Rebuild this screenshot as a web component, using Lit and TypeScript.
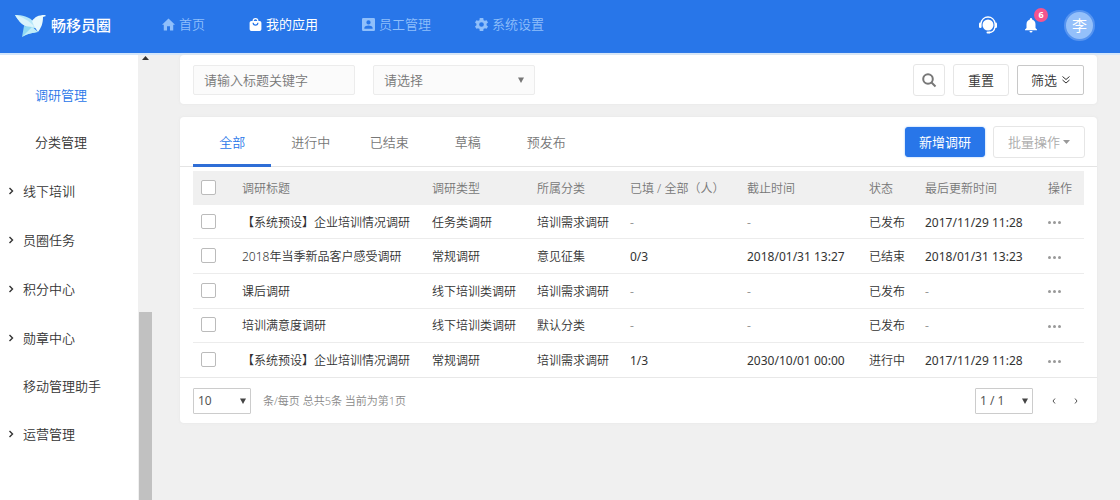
import { LitElement, html, css, svg, nothing } from "lit";
import { customElement, state } from "lit/decorators.js";
import { classMap } from "lit/directives/class-map.js";

interface Survey {
  title: string;
  type: string;
  category: string;
  filled: string;
  deadline: string;
  status: string;
  updated: string;
}

const SURVEYS: Survey[] = [
  { title: "【系统预设】企业培训情况调研", type: "任务类调研", category: "培训需求调研", filled: "-", deadline: "-", status: "已发布", updated: "2017/11/29 11:28" },
  { title: "2018年当季新品客户感受调研", type: "常规调研", category: "意见征集", filled: "0/3", deadline: "2018/01/31 13:27", status: "已结束", updated: "2018/01/31 13:23" },
  { title: "课后调研", type: "线下培训类调研", category: "培训需求调研", filled: "-", deadline: "-", status: "已发布", updated: "-" },
  { title: "培训满意度调研", type: "线下培训类调研", category: "默认分类", filled: "-", deadline: "-", status: "已发布", updated: "-" },
  { title: "【系统预设】企业培训情况调研", type: "常规调研", category: "培训需求调研", filled: "1/3", deadline: "2030/10/01 00:00", status: "进行中", updated: "2017/11/29 11:28" },
];

const NAV = [
  { label: "首页", icon: svg`<path d="M9.500 22v-7h5v7h5.500v-9.500h3L12 2 1 12.500h3V22z"/>` },
  { label: "我的应用", icon: svg`<path d="M19 6h-2A5 5 0 0 0 7 6H5a3 3 0 0 0-3 3v11a3 3 0 0 0 3 3h14a3 3 0 0 0 3-3V9a3 3 0 0 0-3-3zm-7-3a3 3 0 0 1 3 3H9a3 3 0 0 1 3-3zm0 11a5 5 0 0 1-5-5h2a3 3 0 0 0 6 0h2a5 5 0 0 1-5 5z"/>` },
  { label: "员工管理", icon: svg`<path d="M3 1a2 2 0 0 0-2 2v18a2 2 0 0 0 2 2h18a2 2 0 0 0 2-2V3a2 2 0 0 0-2-2zm9 4a3.600 3.600 0 1 1 0 7.200A3.600 3.600 0 0 1 12 5zm7 14H5v-1.500c0-2.500 4.500-3.800 7-3.800s7 1.300 7 3.800z"/>` },
  { label: "系统设置", icon: svg`<path d="M20.500 13.200a9 9 0 0 0 0-2.400l2.500-2-2.400-4.200-3 1.200a9 9 0 0 0-2.100-1.200L15 1H9l-.5 3.600a9 9 0 0 0-2.100 1.200l-3-1.200L1 8.800l2.500 2a9 9 0 0 0 0 2.400l-2.500 2 2.400 4.200 3-1.200a9 9 0 0 0 2.100 1.200L9 23h6l.5-3.600a9 9 0 0 0 2.100-1.200l3 1.200 2.400-4.200zM12 16a4 4 0 1 1 0-8 4 4 0 0 1 0 8z"/>` },
];

const MENU = [
  { label: "调研管理", kind: "sub", active: true },
  { label: "分类管理", kind: "sub" },
  { label: "线下培训", kind: "group" },
  { label: "员圈任务", kind: "group" },
  { label: "积分中心", kind: "group" },
  { label: "勋章中心", kind: "group" },
  { label: "移动管理助手", kind: "plain" },
  { label: "运营管理", kind: "group" },
];

const TABS = ["全部", "进行中", "已结束", "草稿", "预发布"];

const caret = html`<svg class="caret" viewBox="0 0 6 6" aria-hidden="true"><path d="M0 0.500h6L3 6z"/></svg>`;

@customElement("app-root")
export class AppRoot extends LitElement {
  @state() private tab = 0;

  static styles = css`
    :host {
      display: flex;
      flex-direction: column;
      min-height: 100vh;
      background: #f0f0f0;
      color: #333;
      font: 350 13px/20px "Noto Sans", "Noto Sans CJK SC", sans-serif;
    }
    * { box-sizing: border-box; }
    a { color: inherit; text-decoration: none; }
    button, input, select { font: inherit; color: inherit; margin: 0; }
    button { cursor: pointer; padding: 0; }
    svg { display: block; }

    .top {
      display: flex;
      align-items: center;
      height: 55px;
      padding: 0 25px 4px 14px;
      background: #2876e9;
      border-bottom: 2px solid #d3e6fb;
      color: #fff;
    }
    .brand { display: flex; align-items: center; gap: 4px; width: 148px; font-size: 15px; font-weight: 500; }
    .bird { width: 33px; height: 24px; }
    .nav { display: flex; flex: 1; gap: 44px; padding-bottom: 1px; }
    .nav-link { display: flex; align-items: center; gap: 4px; color: #8fbffb; white-space: nowrap; }
    .nav-link svg { width: 13px; height: 13px; fill: currentColor; }
    .nav-link.active { color: #fff; font-weight: 400; }
    .tools { display: flex; align-items: center; gap: 24px; padding-top: 1px; }
    .tool { display: grid; place-content: center; position: relative; border: 0; background: none; color: #fff; }
    .tool svg { fill: currentColor; }
    .headset { width: 20px; height: 20px; }
    .bell { width: 18px; height: 18px; }
    .badge {
      position: absolute;
      top: -8px;
      right: -8px;
      width: 14px;
      border-radius: 7px;
      background: #f5548e;
      font-size: 9px;
      line-height: 14px;
      font-weight: 700;
      text-align: center;
    }
    .avatar {
      width: 31px;
      height: 31px;
      border: 2px solid #5694f0;
      border-radius: 50%;
      background: #94c0fa;
      color: #fff;
      font-size: 15px;
      font-weight: 400;
    }

    .body { display: flex; flex: 1; }
    .side { display: flex; width: 152px; background: #fff; }
    .menu { flex: 1; padding-top: 16px; }
    .menu-link { display: flex; align-items: center; height: 47px; padding-left: 23px; }
    .menu-link.sub { padding-left: 35px; }
    .menu-link.group { height: 49px; padding-left: 7px; gap: 8px; }
    .menu-link.sub + .menu-link.group { margin-top: 1px; }
    .menu-link.active { color: #2876e9; }
    .chev { width: 8px; height: 8px; fill: none; stroke: #333; stroke-width: 1.400; }
    .track { display: flex; flex-direction: column; width: 14px; padding-left: 1px; background: #f0f0f0; }
    .track svg { width: 7px; height: 4px; margin: 1px 3px 0; fill: #333; }
    .thumb { flex: 1; margin-top: 252px; background: #c1c1c1; }

    .main { flex: 1; min-width: 0; padding: 0 23px 0 28px; }
    .card { border-radius: 4px; background: #fff; box-shadow: 0 0 3px #e4e4e4; }
    .filters { display: flex; align-items: center; gap: 8px; padding: 9px 13px 8px; margin-bottom: 13px; }
    .field {
      width: 162px;
      height: 30px;
      padding: 0 10px;
      border: 1px solid #ececec;
      border-radius: 2px;
      background: #fbfbfb;
      color: #777;
      outline: 0;
    }
    .field::placeholder { color: #777; opacity: 1; }
    .picker { display: grid; align-items: center; }
    .picker > * { grid-area: 1 / 1; }
    .picker select { appearance: none; }
    .caret { width: 6px; height: 6px; margin-right: 11px; justify-self: end; fill: #777; pointer-events: none; }
    .filters .picker { margin: 0 auto 0 10px; }
    .btn {
      display: flex;
      align-items: center;
      justify-content: center;
      gap: 5px;
      height: 32px;
      padding: 0 14px;
      border: 1px solid #e6e6e6;
      border-radius: 3px;
      background: #fff;
      white-space: nowrap;
    }
    .btn svg { fill: none; stroke: currentColor; }
    .btn.square { width: 32px; padding: 0; }
    .btn.square svg { width: 16px; height: 16px; stroke-width: 2; color: #777; }
    .btn.outline { height: 30px; padding: 0 13px; border-color: #c8c8c8; border-radius: 2px; }
    .btn.outline svg { width: 8px; height: 8px; }
    .btn.primary { height: 30px; padding: 0 13px; border-color: #2876e9; background: #2876e9; color: #fff; font-weight: 400; box-shadow: 0 0 2px #8bbcfb; }
    .btn.muted { padding: 0 14px; color: #aaa; gap: 3px; }
    .btn.muted svg { width: 7px; height: 4px; fill: #999; stroke: none; }

    .bar { display: flex; align-items: center; gap: 8px; height: 50px; padding: 0 12px 0 13px; border-bottom: 1px solid #e4e4e4; }
    .tabs { display: grid; grid-template-columns: repeat(5, 1fr); align-self: stretch; flex: 0 0 44%; margin: 0 auto -1px 0; }
    .tab { border: 0; border-bottom: 3px solid transparent; padding-top: 3px; background: none; color: #777; }
    .tab.active { border-color: #2f6ed6; color: #2876e9; }

    .list { padding: 4px 13px 0; border-bottom: 1px solid #e8e8e8; }
    .table { width: 100%; height: 206px; table-layout: fixed; border-spacing: 0; font-size: 12px; }
    .table th, .table td { padding: 2px 0 0; text-align: left; font-weight: 350; white-space: nowrap; }
    .table th { height: 34px; background: #f0f0f0; color: #777; }
    .table tr + tr td { border-top: 1px solid #ececec; }
    .table td.value { font-weight: 400; }
    .table td.none { color: #999; }
    .c-check { width: 49px; }
    .c-title { width: 190px; }
    .c-type { width: 105px; }
    .c-cat { width: 93px; }
    .c-filled { width: 117px; }
    .c-due { width: 122px; }
    .c-status { width: 56px; }
    .c-upd { width: 123px; }
    .c-act { width: 36px; }
    .check {
      display: block;
      appearance: none;
      width: 15px;
      height: 15px;
      margin: 0 0 3px 8px;
      border: 1px solid #bbb;
      border-radius: 2px;
      background: #fff;
    }
    .check:checked { background: #2876e9; }
    .more { display: block; border: 0; background: none; }
    .more svg { width: 13px; height: 3px; fill: #999; }

    .foot { display: flex; align-items: center; gap: 12px; height: 45px; padding: 0 16px 0 13px; color: #888; font-size: 11px; }
    .foot select {
      width: 58px;
      height: 26px;
      padding: 0 4px;
      border: 1px solid #ccc;
      border-radius: 1px;
      background: #fff;
      color: #555;
      font-size: 12px;
      font-weight: 400;
    }
    .foot .caret { margin-right: 5px; fill: #444; }
    .count { margin-right: auto; }
    .pages { margin-right: 4px; }
    .step { width: 10px; height: 10px; border: 0; background: none; }
    .step svg { width: 10px; height: 10px; fill: none; stroke: #555; }
  `;

  private renderHeader() {
    return html`
      <header class="top">
        <a class="brand" href="#">
          <svg class="bird" viewBox="0 0 33 24" aria-hidden="true">
            <path fill="#b4e6f8" d="M1 2c7 0 14 1 20 8l3 4-6 2C10 14 5 9 1 2z"/>
            <path fill="#d9f3fb" d="M1 2c8 2 14 6 19 11l-2 2C10 14 5 9 1 2z"/>
            <path fill="#e8f9fd" d="M18 8c3-4 6-6 13-6l1 1-3 1c0 7-2 11-5 15l-4-6z"/>
            <path fill="#8fd8f3" d="M10 13l8 1 6 5c-5 1-10 1-16 5z"/>
            <path fill="#c0ecf8" d="M18 14l6 5c-5 1-10 1-16 5z"/>
          </svg>
          <span>畅移员圈</span>
        </a>
        <nav class="nav">
          ${NAV.map((n, i) => html`
            <a href="#" class=${classMap({ "nav-link": true, active: i === 1 })}>
              <svg viewBox="1 1 22 22" aria-hidden="true">${n.icon}</svg>${n.label}
            </a>`)}
        </nav>
        <div class="tools">
          <button class="tool" aria-label="客服">
            <svg class="headset" viewBox="0 0 20 20">
              <circle cx="10" cy="10" r="5.500"/>
              <path d="M3 8.500C3.500 4.500 6.500 2 10 2s6.500 2.500 7 6.500M17 12c-.5 3.500-3 5.500-6 5.500" fill="none" stroke="currentColor" stroke-width="1.400"/>
              <rect x="1" y="7.500" width="2.600" height="5.500" rx="1.200"/>
              <rect x="16.400" y="7.500" width="2.600" height="5.500" rx="1.200"/>
              <rect x="8.500" y="16.400" width="4" height="2.200" rx="1.100"/>
            </svg>
          </button>
          <button class="tool" aria-label="通知">
            <svg class="bell" viewBox="0 0 24 24"><path d="M12 22a2 2 0 0 0 2-2h-4a2 2 0 0 0 2 2zm6-6v-5c0-3.070-1.640-5.640-4.500-6.320V4a1.500 1.500 0 0 0-3 0v.68C7.630 5.360 6 7.920 6 11v5l-2 2v1h16v-1z"/></svg>
            <span class="badge">6</span>
          </button>
          <button class="tool avatar">李</button>
        </div>
      </header>`;
  }

  private renderSide() {
    return html`
      <aside class="side">
        <nav class="menu">
          ${MENU.map((m) => html`
            <a href="#" class=${classMap({ "menu-link": true, [m.kind]: true, active: !!m.active })}>
              ${m.kind === "group" ? html`<svg class="chev" viewBox="0 0 8 8" aria-hidden="true"><path d="M2.500 1l3 3-3 3"/></svg>` : nothing}
              ${m.label}
            </a>`)}
        </nav>
        <div class="track">
          <svg viewBox="0 0 7 4" aria-hidden="true"><path d="M0 4h7L3.500 0z"/></svg>
          <div class="thumb"></div>
        </div>
      </aside>`;
  }

  private cell(value: string) {
    return html`<td class=${classMap({ value: true, none: value === "-" })}>${value}</td>`;
  }

  private renderTable() {
    return html`
      <table class="table">
        <thead>
          <tr>
            <th class="c-check"><input class="check" type="checkbox" aria-label="全选"></th>
            <th class="c-title">调研标题</th>
            <th class="c-type">调研类型</th>
            <th class="c-cat">所属分类</th>
            <th class="c-filled">已填 / 全部（人）</th>
            <th class="c-due">截止时间</th>
            <th class="c-status">状态</th>
            <th class="c-upd">最后更新时间</th>
            <th class="c-act">操作</th>
          </tr>
        </thead>
        <tbody>
          ${SURVEYS.map((s) => html`
            <tr>
              <td><input class="check" type="checkbox" aria-label=${s.title}></td>
              <td>${s.title}</td>
              <td>${s.type}</td>
              <td>${s.category}</td>
              ${this.cell(s.filled)}
              ${this.cell(s.deadline)}
              <td>${s.status}</td>
              ${this.cell(s.updated)}
              <td>
                <button class="more" aria-label="操作">
                  <svg viewBox="0 0 13 3"><circle cx="1.500" cy="1.500" r="1.500"/><circle cx="6.500" cy="1.500" r="1.500"/><circle cx="11.500" cy="1.500" r="1.500"/></svg>
                </button>
              </td>
            </tr>`)}
        </tbody>
      </table>`;
  }

  render() {
    return html`
      ${this.renderHeader()}
      <div class="body">
        ${this.renderSide()}
        <main class="main">
          <form class="card filters" @submit=${(e: Event) => e.preventDefault()}>
            <input class="field" type="text" placeholder="请输入标题关键字" aria-label="标题关键字">
            <div class="picker">
              <select class="field" aria-label="分类"><option>请选择</option></select>
              ${caret}
            </div>
            <button class="btn square" aria-label="搜索">
              <svg viewBox="0 0 16 16"><circle cx="7" cy="7" r="4.800"/><path d="M10.500 10.500l4 4"/></svg>
            </button>
            <button class="btn" type="reset">重置</button>
            <button class="btn outline" type="button">筛选
              <svg viewBox="0 0 8 8" aria-hidden="true"><path d="M.5.500L4 3.500 7.500.500M.5 4L4 7l3.500-3"/></svg>
            </button>
          </form>
          <section class="card">
            <div class="bar">
              <div class="tabs" role="tablist">
                ${TABS.map((t, i) => html`
                  <button role="tab" aria-selected=${i === this.tab ? "true" : "false"}
                    class=${classMap({ tab: true, active: i === this.tab })}
                    @click=${() => { this.tab = i; }}>${t}</button>`)}
              </div>
              <button class="btn primary">新增调研</button>
              <button class="btn muted">批量操作
                <svg viewBox="0 0 7 4" aria-hidden="true"><path d="M0 0h7L3.500 4z"/></svg>
              </button>
            </div>
            <div class="list">${this.renderTable()}</div>
            <div class="foot">
              <div class="picker">
                <select aria-label="每页条数"><option>10</option></select>
                ${caret}
              </div>
              <span class="count">条/每页 总共5条 当前为第1页</span>
              <div class="picker pages">
                <select aria-label="页码"><option>1 / 1</option></select>
                ${caret}
              </div>
              <button class="step" aria-label="上一页"><svg viewBox="0 0 10 10"><path d="M6 2.500L4 5l2 2.500"/></svg></button>
              <button class="step" aria-label="下一页"><svg viewBox="0 0 10 10"><path d="M4 2.500L6 5 4 7.500"/></svg></button>
            </div>
          </section>
        </main>
      </div>`;
  }
}
